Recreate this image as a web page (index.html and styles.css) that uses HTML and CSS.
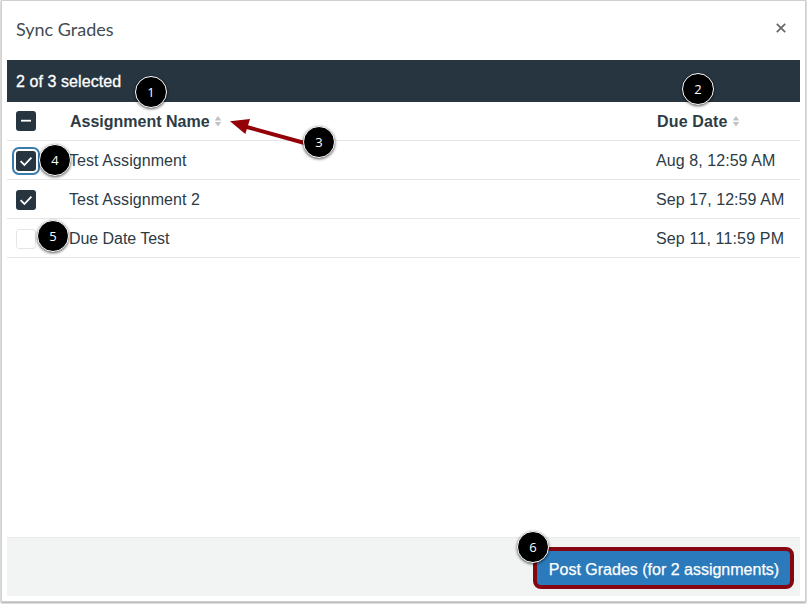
FILE: index.html
```html
<!DOCTYPE html>
<html lang="en">
<head>
<meta charset="utf-8">
<title>Sync Grades</title>
<link rel="stylesheet" href="styles.css">
</head>
<body>
<main class="dialog">
  <header class="dialog-header">
    <h1 class="title">Sync Grades</h1>
    <button class="close" aria-label="Close"><svg width="10" height="10" viewBox="0 0 10 10"><path d="M.8 .8 9.2 9.2M9.2 .8 .8 9.2"/></svg></button>
  </header>
  <div class="selection">2 of 3 selected</div>
  <section class="table">
    <div class="row head">
      <span class="check on"><svg viewBox="0 0 20 20"><path d="M5 9.7H15"/></svg></span>
      <span class="name"><span class="name-label">Assignment Name</span><svg class="sort" viewBox="0 0 8 12"><path d="M4 0 7.6 5H.4ZM4 11.5 7.6 6.5H.4Z"/></svg></span>
      <span class="date"><span class="date-label">Due Date</span><svg class="sort" viewBox="0 0 8 12"><path d="M4 0 7.6 5H.4ZM4 11.5 7.6 6.5H.4Z"/></svg></span>
    </div>
    <div class="row">
      <span class="check on focus"><svg viewBox="0 0 20 20"><path d="M4.6 10.2 8.4 14 15.4 6.6"/></svg></span>
      <span class="name">Test Assignment</span><span class="date">Aug 8, 12:59 AM</span>
    </div>
    <div class="row">
      <span class="check on"><svg viewBox="0 0 20 20"><path d="M4.6 10.2 8.4 14 15.4 6.6"/></svg></span>
      <span class="name">Test Assignment 2</span><span class="date">Sep 17, 12:59 AM</span>
    </div>
    <div class="row">
      <span class="check"></span>
      <span class="name due-test">Due Date Test</span><span class="date wide">Sep 11, 11:59 PM</span>
    </div>
  </section>
  <footer class="dialog-footer"><button class="post">Post Grades (for 2 assignments)</button></footer>
</main>
<svg class="arrow" width="90" height="40" viewBox="0 0 90 40"><path class="shaft" d="M15 11.5 80 29.5"/><path class="tip" d="M0 6.3 20 4 15.3 19Z"/></svg>
<span class="badge b1">1</span>
<span class="badge b2">2</span>
<span class="badge b3">3</span>
<span class="badge b4">4</span>
<span class="badge b5">5</span>
<span class="badge b6">6</span>
</body>
</html>
```
FILE: styles.css
```css
* { box-sizing: border-box; }
body {
  margin: 0;
  height: 604px;
  padding: 1px 2px 3px;
  overflow: hidden;
  background: #fff;
  color: #2d3b45;
  font: 16px/20px "Liberation Sans", Arial, sans-serif;
}
.dialog {
  height: 600px;
  padding: 0 5px 5px;
  display: flex;
  flex-direction: column;
  background: #fff;
  box-shadow: 0 0 1px 1px #d0d0d0, 0 1px 2px 1px #999;
}
.dialog-header {
  height: 59px;
  padding: 0 14px 3px 9px;
  display: flex;
  align-items: center;
  justify-content: space-between;
}
.title { margin: 0; font: 400 18px/24px Lato, sans-serif; color: #414c54; }
button { border: 0; padding: 0; background: none; font: inherit; }
.close { display: flex; margin-top: -3px; }
.close path { stroke: #666; stroke-width: 1.7; fill: none; }
.selection {
  height: 42px;
  padding: 1px 9px 0;
  line-height: 42px;
  letter-spacing: .08px;
  background: #273540;
  color: #fff;
  -webkit-text-stroke: .3px #fff;
}
.table { flex: 1; }
.row {
  height: 39px;
  display: grid;
  grid-template-columns: 53px 587px 1fr;
  align-items: center;
  padding: 2px 0 0 9px;
  border-bottom: 1px solid #e3e5e7;
  letter-spacing: .07px;
}
.head { padding-top: 0; font-weight: 700; letter-spacing: 0; }
.name, .date { display: flex; align-items: center; white-space: nowrap; }
.head .name, .head .date { padding: 1px 0 0 1px; }
.date-label { letter-spacing: .15px; }
.due-test { letter-spacing: -.05px; }
.wide { letter-spacing: .15px; }
.sort { width: 8px; height: 11px; margin-left: 4px; fill: #bfc3c6; }
.check {
  width: 20px;
  height: 20px;
  border: 1px solid #e3e6e8;
  border-radius: 3px;
}
.check.on { border: 0; background: #273540; }
.check svg { display: block; width: 20px; height: 20px; fill: none; stroke: #fff; stroke-width: 1.8; }
.check.focus { box-shadow: 0 0 0 2px #fff, 0 0 0 4px #3a7cac; }
.dialog-footer {
  height: 59px;
  padding: 2px 6px 0 0;
  display: flex;
  align-items: center;
  justify-content: flex-end;
  background: #f2f3f3;
  border-top: 1px solid #e8eaeb;
}
.post {
  width: 261px;
  height: 42px;
  padding: 3px 0 0 1px;
  border: 4px solid #850711;
  border-radius: 8px;
  background: #2b7abc;
  color: #fff;
  white-space: nowrap;
  -webkit-text-stroke: .25px #fff;
}
.badge {
  position: absolute;
  width: 32px;
  height: 32px;
  border: 1.5px solid #fff;
  border-radius: 50%;
  background: #000;
  color: #fff;
  font: 13px/30px "Open Sans", sans-serif;
  text-align: center;
  box-shadow: 0 1px 3px rgba(0,0,0,.65);
}
.b1 { left: 135px; top: 76px; }
.b2 { left: 682px; top: 73px; }
.b3 { left: 303px; top: 126px; }
.b4 { left: 39px; top: 144px; }
.b5 { left: 37px; top: 220px; }
.b6 { left: 517px; top: 531px; }
.arrow { position: absolute; left: 230px; top: 115px; }
.shaft { stroke: #930008; stroke-width: 4; }
.tip { fill: #930008; }
```
